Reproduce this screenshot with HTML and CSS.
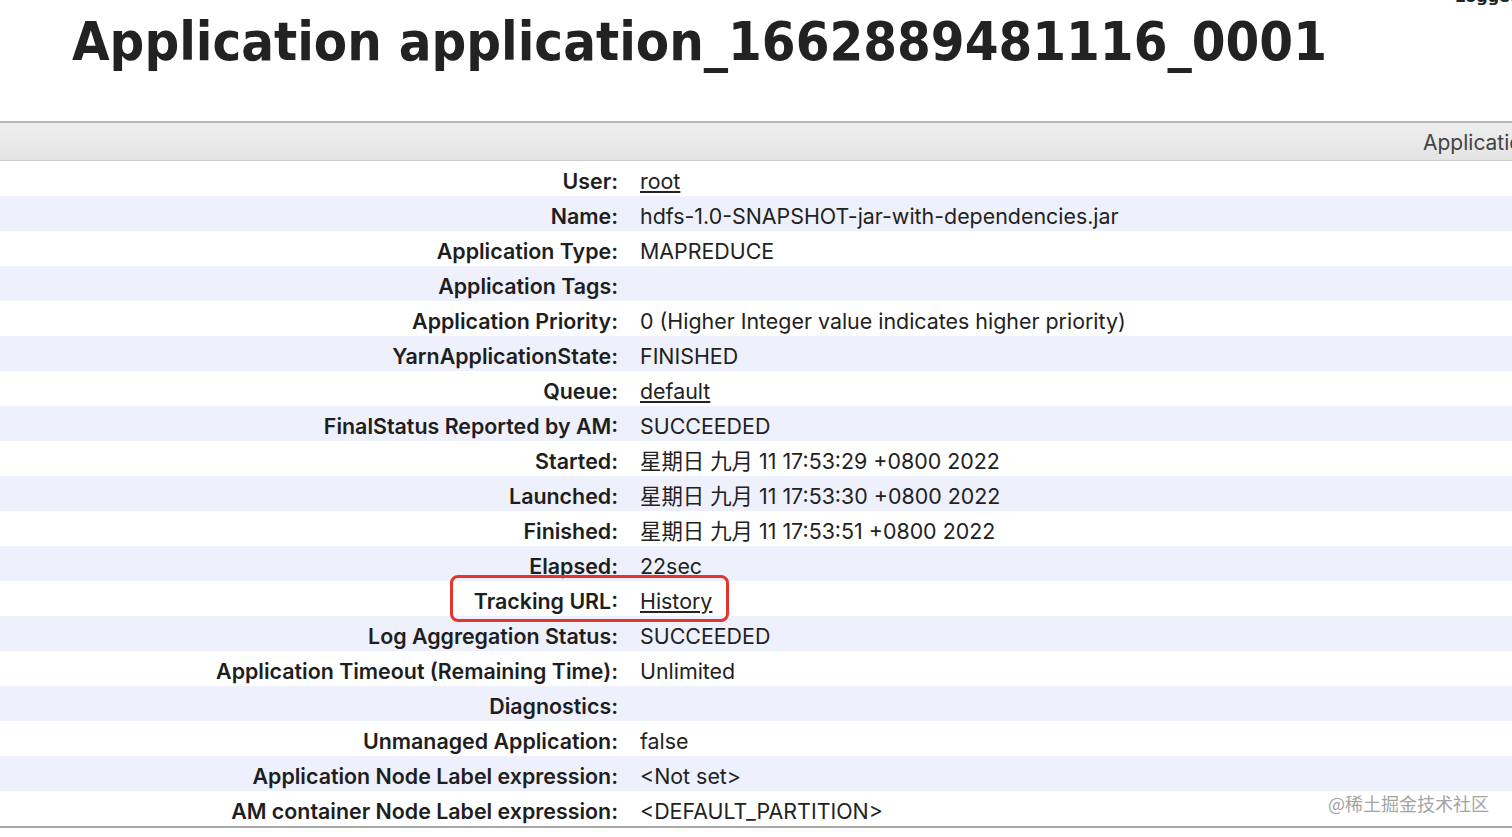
FILE: index.html
```html
<!DOCTYPE html>
<html>
<head>
<meta charset="utf-8">
<link rel="stylesheet" href="styles.css">
</head>
<body>
<div class="page">
  <div class="login">Logged in as: dr.who</div>
  <h1 class="title">Application application_1662889481116_0001</h1>
  <div class="panel">
    <div class="panel-head">Application Overview</div>
    <div class="info">
      <div class="row"><div class="k">User:</div><div class="v"><a href="#">root</a></div></div>
      <div class="row"><div class="k">Name:</div><div class="v">hdfs-1.0-SNAPSHOT-jar-with-dependencies.jar</div></div>
      <div class="row"><div class="k">Application Type:</div><div class="v">MAPREDUCE</div></div>
      <div class="row"><div class="k">Application Tags:</div><div class="v"></div></div>
      <div class="row"><div class="k">Application Priority:</div><div class="v">0 (Higher Integer value indicates higher priority)</div></div>
      <div class="row"><div class="k">YarnApplicationState:</div><div class="v">FINISHED</div></div>
      <div class="row"><div class="k">Queue:</div><div class="v"><a href="#">default</a></div></div>
      <div class="row"><div class="k">FinalStatus Reported by AM:</div><div class="v">SUCCEEDED</div></div>
      <div class="row"><div class="k">Started:</div><div class="v">星期日 九月 11 17:53:29 +0800 2022</div></div>
      <div class="row"><div class="k">Launched:</div><div class="v">星期日 九月 11 17:53:30 +0800 2022</div></div>
      <div class="row"><div class="k">Finished:</div><div class="v">星期日 九月 11 17:53:51 +0800 2022</div></div>
      <div class="row"><div class="k">Elapsed:</div><div class="v">22sec</div></div>
      <div class="row"><div class="k">Tracking URL:</div><div class="v"><a href="#">History</a></div></div>
      <div class="row"><div class="k">Log Aggregation Status:</div><div class="v">SUCCEEDED</div></div>
      <div class="row"><div class="k">Application Timeout (Remaining Time):</div><div class="v">Unlimited</div></div>
      <div class="row"><div class="k">Diagnostics:</div><div class="v"></div></div>
      <div class="row"><div class="k">Unmanaged Application:</div><div class="v">false</div></div>
      <div class="row"><div class="k">Application Node Label expression:</div><div class="v">&lt;Not set&gt;</div></div>
      <div class="row"><div class="k">AM container Node Label expression:</div><div class="v">&lt;DEFAULT_PARTITION&gt;</div></div>
    </div>
  </div>
  <div class="highlight"></div>
  <div class="watermark">@稀土掘金技术社区</div>
</div>
</body>
</html>
```

FILE: styles.css
```css
html, body {
  margin: 0;
  padding: 0;
  background: #ffffff;
}
.page {
  position: relative;
  width: 1512px;
  height: 837px;
  overflow: hidden;
  font-family: Inter, "Liberation Sans", "Noto Sans CJK SC", sans-serif;
  color: #1e1e1e;
}
.login {
  position: absolute;
  top: -13px;
  left: 1455px;
  font-family: "DejaVu Sans", sans-serif;
  font-weight: bold;
  font-size: 16px;
  white-space: nowrap;
  color: #222;
}
.title {
  margin: 0;
  height: 121px;
  padding: 12px 0 0 72px;
  box-sizing: border-box;
  font-family: "DejaVu Sans Condensed", "DejaVu Sans", sans-serif;
  font-stretch: condensed;
  font-weight: bold;
  font-size: 54px;
  line-height: 60px;
  color: #222;
  white-space: nowrap;
}
.panel {
  border-top: 2px solid #b8b8b8;
  border-bottom: 2px solid #a8a8a8;
}
.panel-head {
  height: 37px;
  line-height: 39px;
  padding-left: 1423px;
  white-space: nowrap;
  overflow: hidden;
  font-size: 21px;
  color: #444;
  background: linear-gradient(#eeeeee, #e4e4e4);
  border-bottom: 1px solid #cfcfcf;
}
.info {
  display: flex;
  flex-direction: column;
}
.row {
  display: flex;
  height: 35px;
  line-height: 35px;
  padding-top: 3px;
  box-sizing: border-box;
  font-size: 21.4px;
  white-space: nowrap;
}
.row:nth-child(even) {
  background: #eef0fb;
}
.k {
  width: 618px;
  height: 32px;
  text-align: right;
  font-weight: 600;
  color: #1e1e1e;
}
.v {
  height: 32px;
  padding-left: 22px;
  color: #222;
}
.v a {
  color: #222;
  text-decoration: underline;
}
.highlight {
  position: absolute;
  left: 450px;
  top: 575px;
  width: 279px;
  height: 47px;
  box-sizing: border-box;
  border: 3px solid #e2362c;
  border-radius: 8px;
}
.watermark {
  position: absolute;
  left: 1328px;
  top: 792px;
  font-family: "Noto Sans CJK SC", sans-serif;
  font-size: 18px;
  line-height: 22px;
  color: #a4a4a4;
  white-space: nowrap;
}
```
